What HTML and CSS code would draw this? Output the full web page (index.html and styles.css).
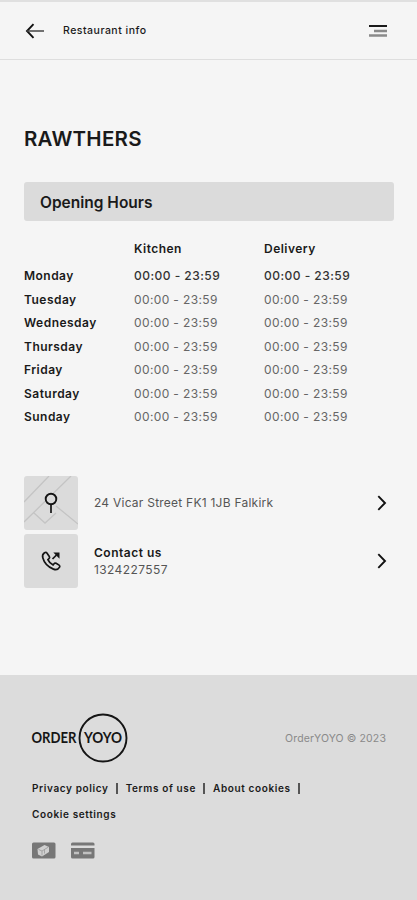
FILE: index.html
```html
<!doctype html>
<html lang="en">
<head>
<meta charset="UTF-8">
<meta name="viewport" content="width=device-width, initial-scale=1">
<title>Restaurant info</title>
<link rel="stylesheet" href="styles.css">
</head>
<body>
	<header class="topbar">
		<svg class="back" width="20" height="16" viewBox="0 0 20 16">
			<path d="M8.500 1.200L2 8l6.500 6.800" fill="none" stroke="#111" stroke-width="1.900"/>
			<path d="M2 8h17" stroke="#444" stroke-width="1.500"/>
		</svg>
		<span class="topbar-title">Restaurant info</span>
		<svg class="menu" width="18" height="14" viewBox="0 0 18 14">
			<path d="M0 2h18" stroke="#1a1a1a" stroke-width="2"/>
			<path d="M5 7h13M0 11.500h18" stroke="#8a8a8a" stroke-width="2.400"/>
		</svg>
	</header>
	<main>
		<h1>RAWTHERS</h1>
		<h2>Opening Hours</h2>
		<table class="hours">
			<tr class="head"><th></th><th>Kitchen</th><th>Delivery</th></tr>
			<tr class="today"><th>Monday</th><td>00:00 - 23:59</td><td>00:00 - 23:59</td></tr>
			<tr><th>Tuesday</th><td>00:00 - 23:59</td><td>00:00 - 23:59</td></tr>
			<tr><th>Wednesday</th><td>00:00 - 23:59</td><td>00:00 - 23:59</td></tr>
			<tr><th>Thursday</th><td>00:00 - 23:59</td><td>00:00 - 23:59</td></tr>
			<tr><th>Friday</th><td>00:00 - 23:59</td><td>00:00 - 23:59</td></tr>
			<tr><th>Saturday</th><td>00:00 - 23:59</td><td>00:00 - 23:59</td></tr>
			<tr><th>Sunday</th><td>00:00 - 23:59</td><td>00:00 - 23:59</td></tr>
		</table>
		<div class="links">
			<div class="link">
				<svg class="tile" width="54" height="54" viewBox="0 0 54 54">
					<path d="M0 26L25 0M0 46L47 0M10 37l11 10 11-10M32 30l22 18" fill="none" stroke="#c4c4c4" stroke-width="1.300"/>
					<circle cx="27" cy="23" r="5.300" fill="#dbdbdb" stroke="#151515" stroke-width="1.900"/>
					<path d="M27 28.500v8.500" stroke="#151515" stroke-width="1.700"/>
				</svg>
				<div class="link-text address">24 Vicar Street FK1 1JB Falkirk</div>
				<svg class="chevron" width="10" height="16" viewBox="0 0 10 16"><path d="M1.300 1.200L8 8l-6.700 6.800" fill="none" stroke="#111" stroke-width="1.900"/></svg>
			</div>
			<div class="link">
				<svg class="tile" width="54" height="54" viewBox="0 0 54 54">
					<path d="M20.500 18.800c-1.500 1-2.400 2.600-1.700 5 1.400 5.200 5.400 9.300 10.600 11.300 2.600 1 5 .2 6.200-1.900.5-.9.200-1.600-.5-2.100l-3-1.800c-.8-.5-1.500-.3-2.100.5l-.9 1.100c-2.400-1.100-4.200-3-5.200-5.300l1.100-1c.7-.6.8-1.300.3-2.100l-2.400-3.500c-.6-.8-1.400-.8-2.400-.2z" fill="none" stroke="#151515" stroke-width="1.700"/>
					<path d="M28.500 25l4-4" stroke="#151515" stroke-width="1.700"/>
					<path d="M29.300 18.500h6.200v6.200z" fill="#151515"/>
				</svg>
				<div class="link-text contact"><b>Contact us</b><br><span class="phone">1324227557</span></div>
				<svg class="chevron" width="10" height="16" viewBox="0 0 10 16"><path d="M1.300 1.200L8 8l-6.700 6.800" fill="none" stroke="#111" stroke-width="1.900"/></svg>
			</div>
		</div>
	</main>
	<footer>
		<div class="brand">
			<svg width="98" height="50" viewBox="0 0 98 50">
				<g class="logo-text">
					<text x="0.500" y="30" textLength="45" lengthAdjust="spacingAndGlyphs">ORDER</text>
					<text x="53" y="30" textLength="38" lengthAdjust="spacingAndGlyphs">YOYO</text>
				</g>
				<circle cx="72" cy="25" r="23.500" fill="none" stroke="#151515" stroke-width="1.900"/>
			</svg>
			<span class="copyright">OrderYOYO © 2023</span>
		</div>
		<ul class="policies">
			<li>Privacy policy</li>
			<li>Terms of use</li>
			<li>About cookies</li>
			<li>Cookie settings</li>
		</ul>
		<div class="payments">
			<svg width="24" height="17" viewBox="0 0 24 17">
				<rect x="0" y="0.500" width="23.500" height="16" rx="1.500" fill="#777"/>
				<path d="M5.500 7l7-4 4.500 2v5l-7 4.500-4-2z" fill="#d0d0d0"/>
				<path d="M6.500 7.500l3.500 1.500v4.500M10 9l6.500-4M12.500 7.500v4" fill="none" stroke="#999" stroke-width=".8"/>
			</svg>
			<svg width="24" height="17" viewBox="0 0 24 17">
				<path d="M0 3.500v-1.500q0-1.500 1.500-1.500h20.500q1.500 0 1.500 1.500v1.500z" fill="#777"/>
				<path d="M0 6h23.500v9q0 1.500-1.500 1.500h-20.500q-1.500 0-1.500-1.500z" fill="#777"/>
				<path d="M3 11h5M12 11h8.500" stroke="#c0c0c0" stroke-width="2.400"/>
			</svg>
		</div>
	</footer>
</body>
</html>
```
FILE: styles.css
```css
* {
	box-sizing: border-box;
}
body {
	margin: 0;
	min-height: 900px;
	display: flex;
	flex-direction: column;
	background-color: #f5f5f5;
	color: #1a1a1a;
	font-family: Inter, "Liberation Sans", sans-serif;
	font-size: 12px;
}
svg {
	display: block;
	flex-shrink: 0;
}
.topbar {
	height: 60px;
	padding: 0 30px 0 25px;
	display: flex;
	align-items: center;
	border-top: 2px solid #e0e0e0;
	border-bottom: 1px solid #dedede;
}
.topbar-title {
	margin-left: 18px;
	font-size: 10.5px;
	font-weight: 500;
	line-height: 14px;
	letter-spacing: 0.5px;
}
.menu {
	margin-left: auto;
}
main {
	flex: 1;
	padding: 66px 23px 0 24px;
}
h1 {
	margin: 0;
	font-size: 20.5px;
	font-weight: 600;
	line-height: 26px;
	letter-spacing: 0.25px;
}
h2 {
	margin: 30px 0 0;
	height: 39px;
	padding-left: 16px;
	background-color: #dbdbdb;
	border-radius: 3px;
	font-size: 15.5px;
	font-weight: 600;
	line-height: 41px;
}
.hours {
	margin-top: 14px;
	width: 370px;
	table-layout: fixed;
	border-collapse: collapse;
	letter-spacing: 0.47px;
}
.hours tr {
	height: 23.5px;
}
.hours .head {
	height: 29px;
}
.hours th, .hours td {
	padding: 0;
	text-align: left;
	color: #666;
}
.hours td {
	letter-spacing: 0.37px;
}
.hours th {
	font-weight: 600;
	color: #1a1a1a;
}
.hours .head th {
	padding-bottom: 2px;
}
.hours th:first-child {
	width: 110px;
}
.hours .today td {
	font-weight: 500;
	letter-spacing: 0.47px;
	color: #333;
}
.links {
	margin-top: 47px;
}
.link {
	height: 54px;
	margin-bottom: 4px;
	padding-right: 7px;
	display: flex;
	align-items: center;
}
.tile {
	background-color: #dbdbdb;
	border-radius: 3px;
}
.link-text {
	margin-left: 16px;
	line-height: 17px;
}
.link-text b {
	font-weight: 600;
	letter-spacing: 0.5px;
}
.address, .phone {
	color: #555;
}
.address {
	letter-spacing: 0.24px;
}
.phone {
	letter-spacing: 0.4px;
}
.chevron {
	margin-left: auto;
}
footer {
	height: 225px;
	padding: 38px 31px 0;
	background-color: #dcdcdc;
}
.brand {
	display: flex;
	align-items: center;
	justify-content: space-between;
}
.logo-text {
	font-family: Lato, sans-serif;
	font-size: 15.5px;
	font-weight: 700;
	fill: #151515;
}
.copyright {
	color: #8a8a8a;
	font-size: 10.5px;
	letter-spacing: 0.12px;
}
.policies {
	margin: 12px 0 0;
	padding: 0 0 0 1px;
	width: 300px;
	display: flex;
	flex-wrap: wrap;
	list-style: none;
	font-size: 10px;
	font-weight: 600;
	line-height: 26px;
	letter-spacing: 0.63px;
}
.policies li {
	display: flex;
	align-items: center;
}
.policies li:not(:last-child)::after {
	content: "";
	width: 2px;
	height: 11px;
	margin: 0 8px 0 7px;
	background-color: #555;
}
.payments {
	margin-top: 15px;
	display: flex;
	gap: 15px;
	padding-left: 1px;
}
```
